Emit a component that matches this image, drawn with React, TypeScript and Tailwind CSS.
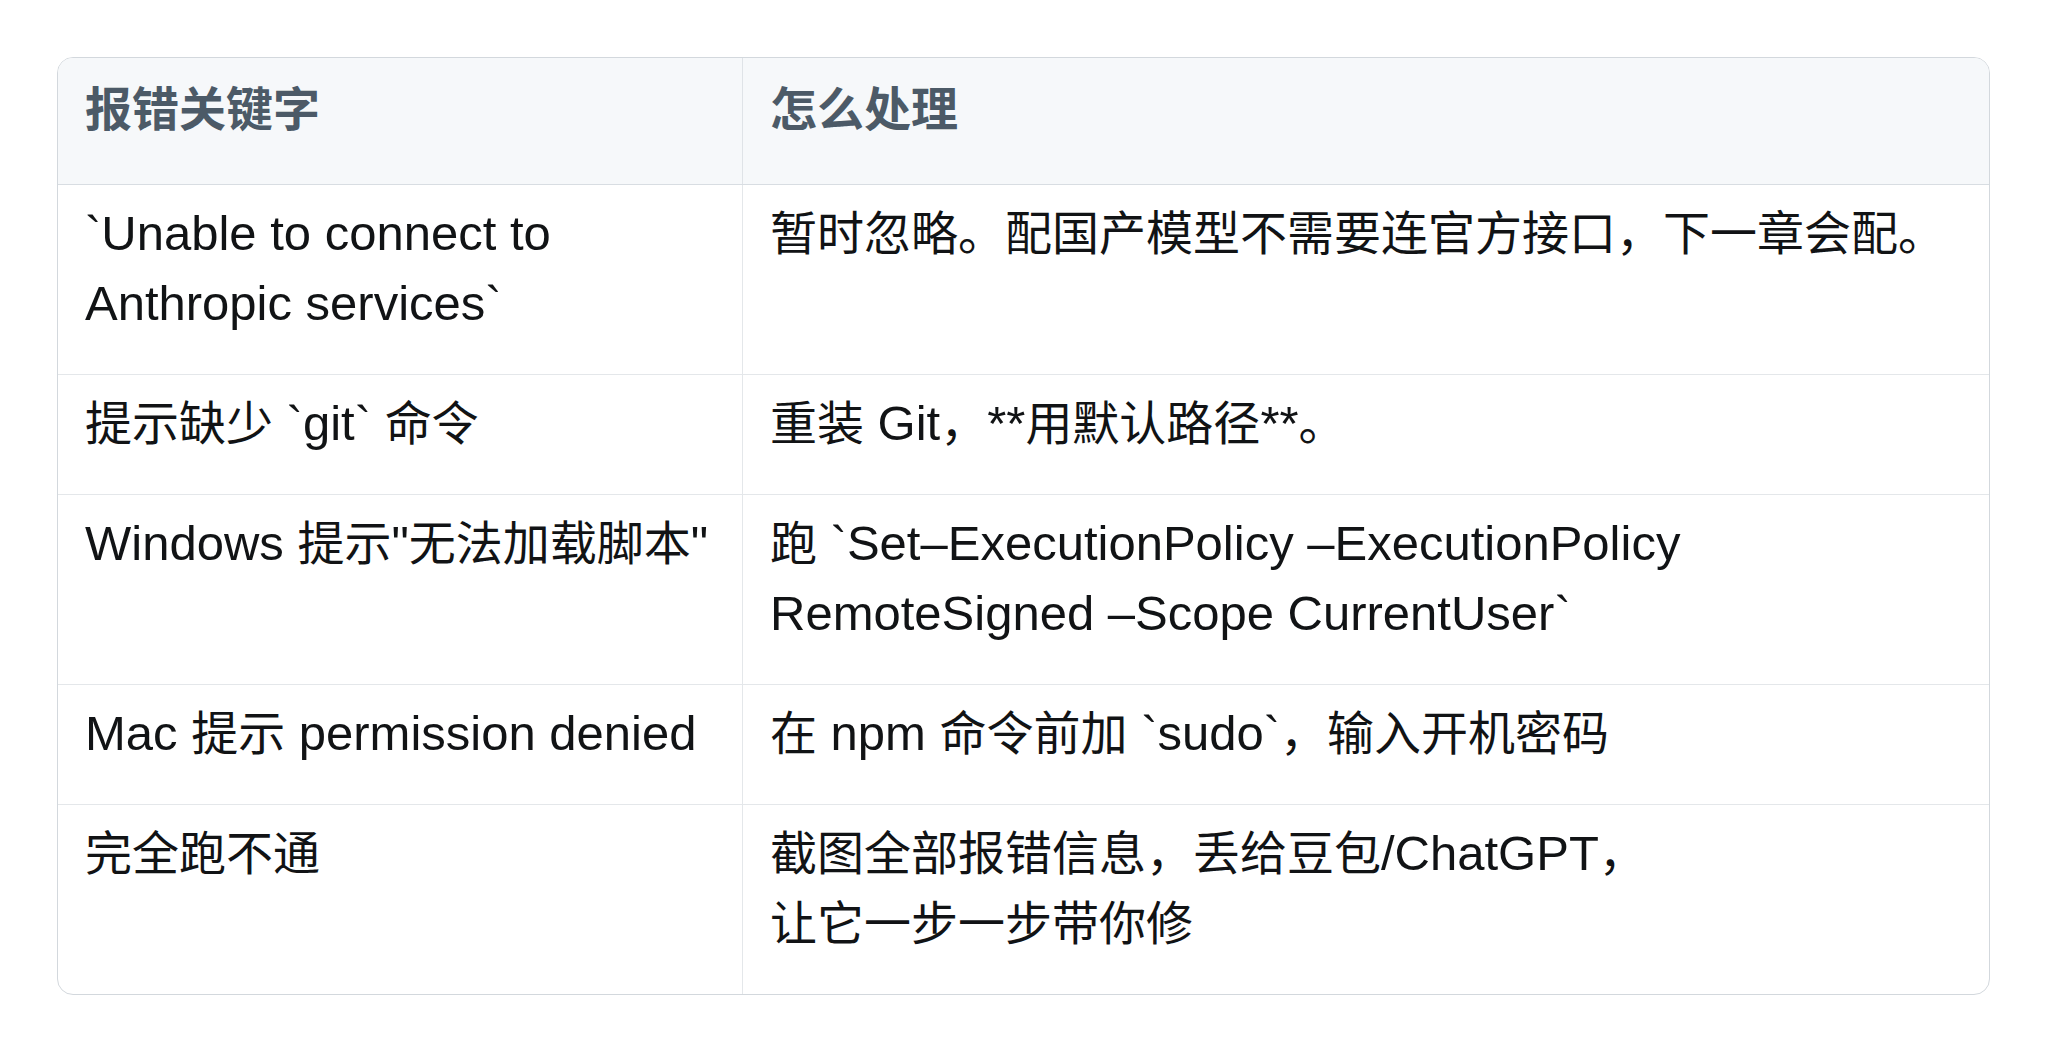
import React from "react";

const rows: { key: string; fix: string }[] = [
  {
    key: "`Unable to connect to Anthropic services`",
    fix: "暂时忽略。配国产模型不需要连官方接口，下一章会配。",
  },
  { key: "提示缺少 `git` 命令", fix: "重装 Git，**用默认路径**。" },
  {
    key: 'Windows 提示"无法加载脚本"',
    fix: "跑 `Set–ExecutionPolicy –ExecutionPolicy RemoteSigned –Scope CurrentUser`",
  },
  { key: "Mac 提示 permission denied", fix: "在 npm 命令前加 `sudo`，输入开机密码" },
  { key: "完全跑不通", fix: "截图全部报错信息，丢给豆包/ChatGPT，\n让它一步一步带你修" },
];

// latin runs come out a touch wider in the original, bump them up a bit
function Mixed({ text }: { text: string }) {
  const lines = text.split("\n");
  return (
    <>
      {lines.map((line, li) => (
        <React.Fragment key={li}>
          {li > 0 && <br />}
          {line.split(/([\x20-\x7E\u2013]+)/).map((part, i) =>
            /^[\x20-\x7E\u2013]+$/.test(part) ? (
              <span key={i} className="text-[49px] leading-[50px]">
                {part}
              </span>
            ) : (
              part
            )
          )}
        </React.Fragment>
      ))}
    </>
  );
}

export default function App() {
  return (
    <div className="min-h-screen w-full bg-white pt-[57px] pl-[57px] font-['Liberation_Sans','Noto_Sans_CJK_SC',sans-serif]">
      <div className="w-[1933px] rounded-[16px] border border-[#d3d8dd] overflow-hidden">
        {/* Header */}
        <div className="grid grid-cols-[684px_1fr] bg-[#f6f8fa] border-b border-[#d8dde2]">
          <div className="px-[27px] pt-[17px] pb-[40px] text-[47px] leading-[69px] font-bold text-[#4c5a67]">
            报错关键字
          </div>
          <div className="border-l border-[#dfe3e7] px-[27px] pt-[17px] pb-[40px] text-[47px] leading-[69px] font-bold text-[#4c5a67]">
            怎么处理
          </div>
        </div>

        {/* Rows */}
        {rows.map((row, i) => (
          <div
            key={i}
            className={
              "grid grid-cols-[684px_1fr] " +
              (i < rows.length - 1 ? "border-b border-[#e4e7ea]" : "")
            }
          >
            <div className="px-[27px] pt-[14px] pb-[35px] text-[47px] leading-[70px] text-[#111315]">
              <Mixed text={row.key} />
            </div>
            <div className="border-l border-[#e4e7ea] px-[27px] pt-[14px] pb-[35px] text-[47px] leading-[70px] text-[#111315]">
              <Mixed text={row.fix} />
            </div>
          </div>
        ))}
      </div>
    </div>
  );
}
